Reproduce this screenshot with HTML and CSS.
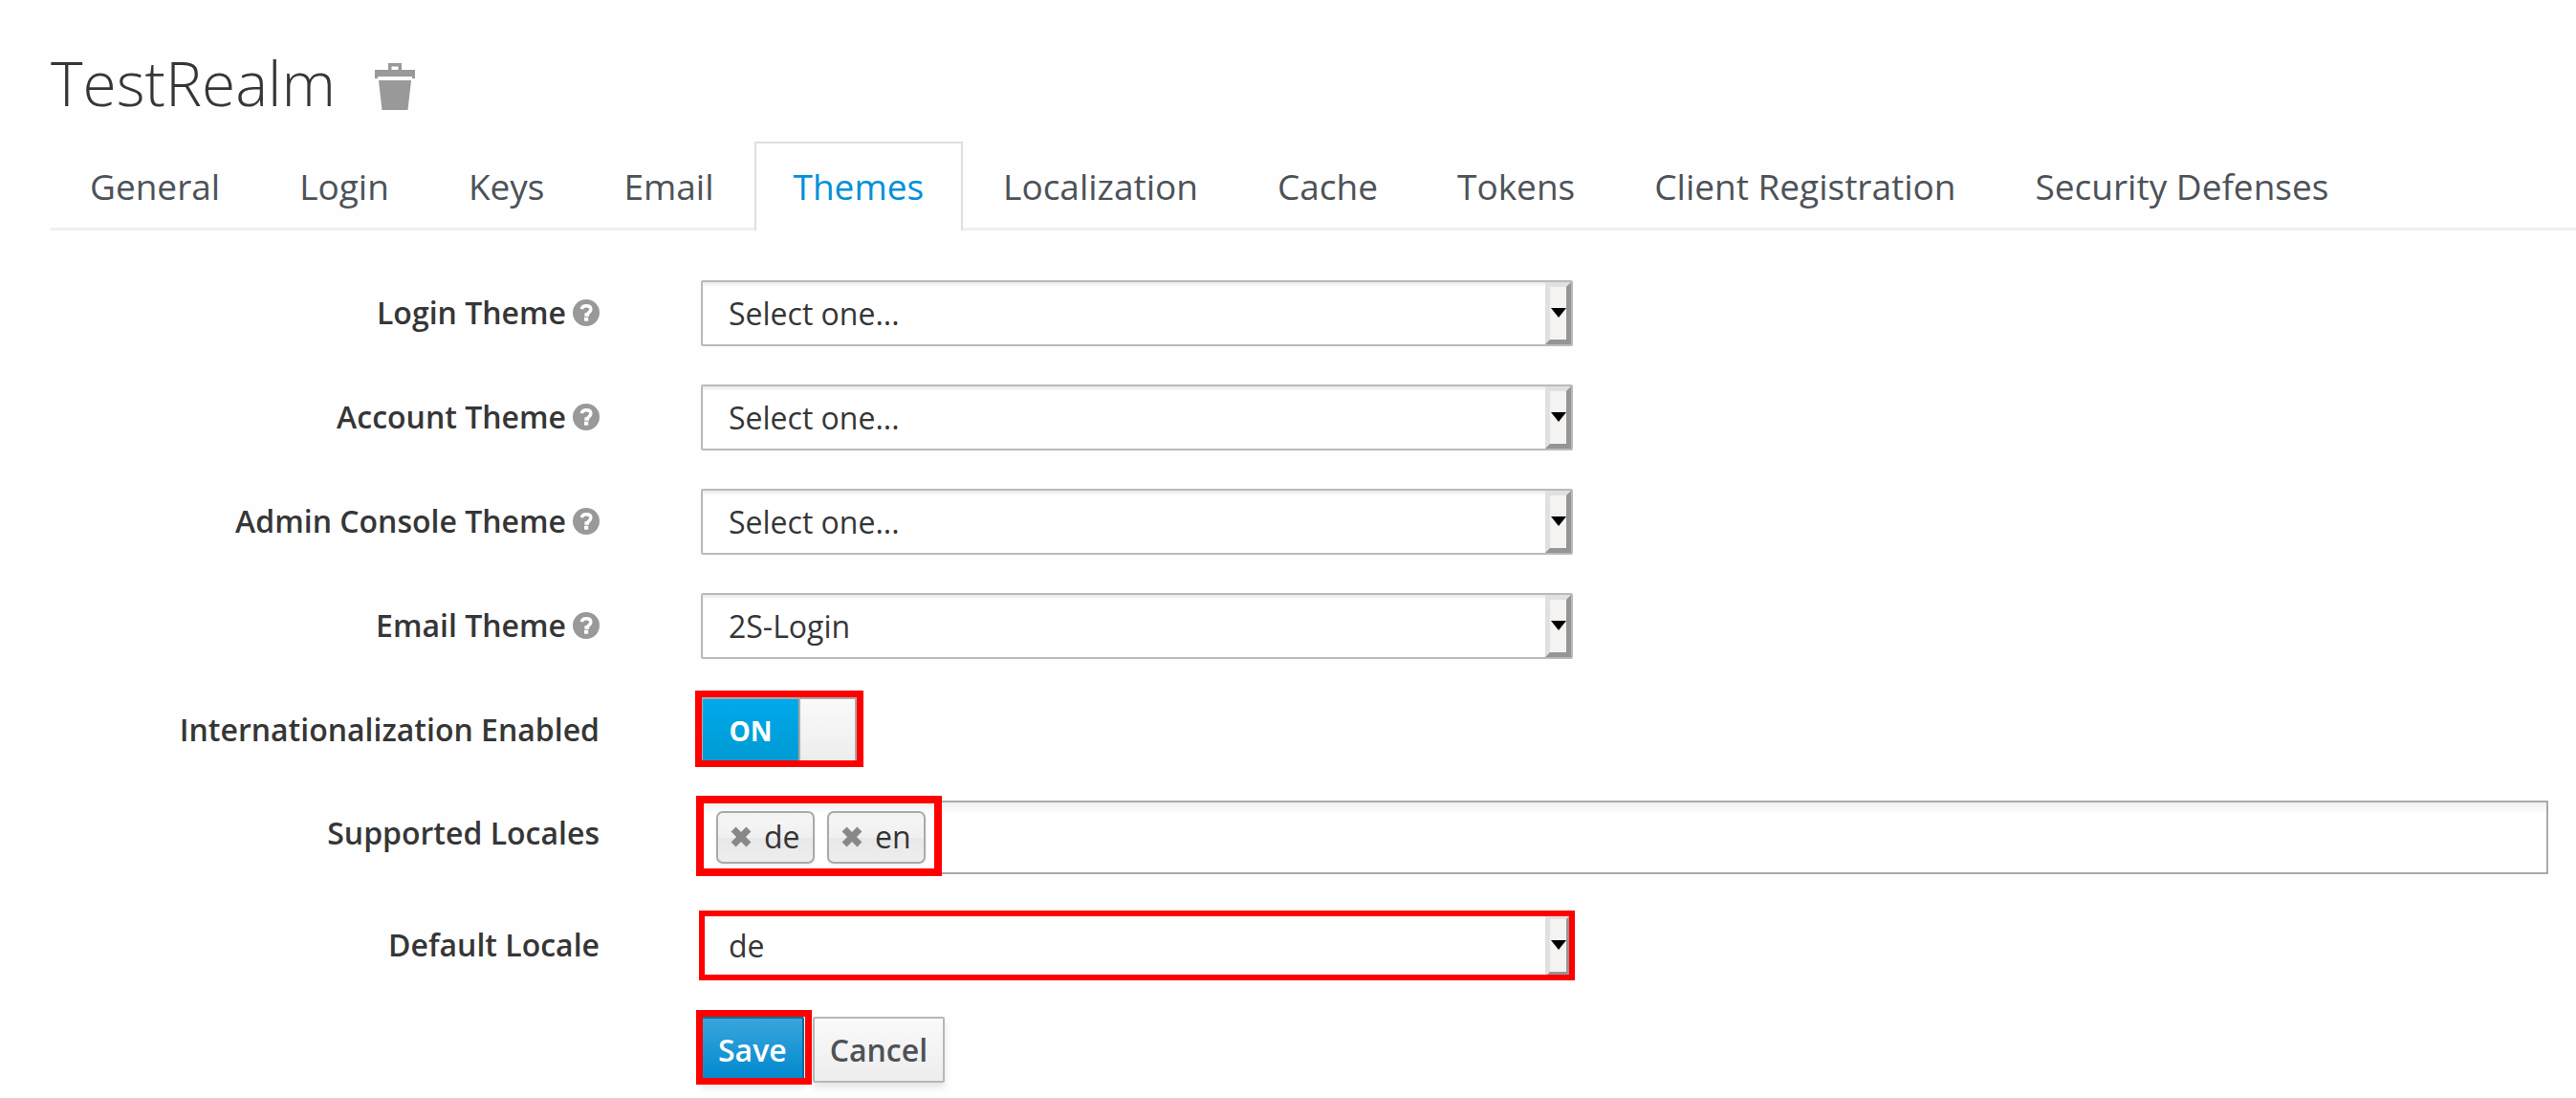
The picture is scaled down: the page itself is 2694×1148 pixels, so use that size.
FILE: index.html
```html
<!DOCTYPE html>
<html lang="en">
<head>
<meta charset="utf-8">
<title>TestRealm - Themes</title>
<link rel="stylesheet" href="styles.css">
</head>
<body>
<svg class="sprite" aria-hidden="true">
  <symbol id="help" viewBox="0 0 28 28">
    <circle cx="14" cy="14" r="14" fill="#999"/>
    <path d="M9.3 10.2C9.9 7.5 11.6 6.8 14 6.8c2.900 0 4.900 1.300 4.900 3.700 0 3-3.500 3.100-3.500 5.500h-3" fill="none" stroke="#fff" stroke-width="3.400"/>
    <rect x="12" y="18.700" width="4.200" height="4" fill="#fff"/>
  </symbol>
  <symbol id="cross" viewBox="0 0 20 20">
    <path d="M2.800 2.800l14.400 14.400M17.200 2.800L2.800 17.200" stroke="#888" stroke-width="6.400"/>
  </symbol>
</svg>
<main class="page">
  <header class="heading">
    <h1 class="title">TestRealm</h1>
    <button class="delete" type="button" aria-label="Delete realm">
      <svg class="trash" viewBox="0 0 42 49" aria-hidden="true"><path fill="#999" fill-rule="evenodd" d="M14 0h14v7h14v9h-3v-2H3v2H0V7h14zM17.500 3.500V7h7V3.500zM4 18h34l-3.500 31h-27z"/></svg>
    </button>
  </header>
  <nav class="tabs">
    <a class="tab" href="#general">General</a>
    <a class="tab" href="#login">Login</a>
    <a class="tab" href="#keys">Keys</a>
    <a class="tab" href="#email">Email</a>
    <a class="tab active" href="#themes" aria-current="page">Themes</a>
    <a class="tab" href="#localization">Localization</a>
    <a class="tab" href="#cache">Cache</a>
    <a class="tab" href="#tokens">Tokens</a>
    <a class="tab" href="#clients">Client Registration</a>
    <a class="tab" href="#security">Security Defenses</a>
  </nav>
  <form class="form">
    <div class="row">
      <label class="label" for="login-theme">Login Theme <svg class="help"><use href="#help"/></svg></label>
      <div class="picker"><select class="select" id="login-theme"><option>Select one...</option></select></div>
    </div>
    <div class="row">
      <label class="label" for="account-theme">Account Theme <svg class="help"><use href="#help"/></svg></label>
      <div class="picker"><select class="select" id="account-theme"><option>Select one...</option></select></div>
    </div>
    <div class="row">
      <label class="label" for="admin-theme">Admin Console Theme <svg class="help"><use href="#help"/></svg></label>
      <div class="picker"><select class="select" id="admin-theme"><option>Select one...</option></select></div>
    </div>
    <div class="row">
      <label class="label" for="email-theme">Email Theme <svg class="help"><use href="#help"/></svg></label>
      <div class="picker"><select class="select" id="email-theme"><option>2S-Login</option></select></div>
    </div>
    <div class="row">
      <label class="label" for="i18n">Internationalization Enabled</label>
      <div class="marked marked-switch">
        <div class="switch">
          <input class="switch-input" id="i18n" type="checkbox" checked>
          <span class="switch-on">ON</span>
          <span class="switch-knob"></span>
        </div>
      </div>
    </div>
    <div class="row">
      <label class="label" for="locales">Supported Locales</label>
      <div class="locales">
        <div class="marked marked-tags">
          <ul class="tags">
            <li class="tag"><button class="remove" type="button" aria-label="Remove de"><svg class="cross"><use href="#cross"/></svg></button>de</li>
            <li class="tag"><button class="remove" type="button" aria-label="Remove en"><svg class="cross"><use href="#cross"/></svg></button>en</li>
          </ul>
        </div>
        <input class="locale-input" id="locales" type="text">
      </div>
    </div>
    <div class="row">
      <label class="label" for="default-locale">Default Locale</label>
      <div class="marked marked-select">
        <div class="picker"><select class="select" id="default-locale"><option>de</option></select></div>
      </div>
    </div>
    <div class="row">
      <div class="actions">
        <div class="marked marked-save"><button class="button primary" type="submit">Save</button></div>
        <button class="button" type="button">Cancel</button>
      </div>
    </div>
  </form>
</main>
</body>
</html>
```
FILE: styles.css
```css
*, *::before, *::after { box-sizing: border-box; }

body {
  margin: 0;
  background: #fefefe;
  color: #363636;
  font: 32px/44px "Open Sans", "Noto Sans", sans-serif;
}

.sprite { position: absolute; width: 0; height: 0; }

.page { padding: 43px 0 0 53px; }

.heading { display: flex; align-items: center; gap: 41px; }
.title { margin: 0; font-size: 64px; line-height: 88px; font-weight: 300; }
.delete { padding: 6px 0 0; border: 0; background: none; }
.trash { display: block; width: 42px; height: 49px; }

.tabs {
  display: flex;
  gap: 1px;
  margin-top: 17px;
  border-bottom: 3px solid #efefef;
}
.tab {
  margin-bottom: -3px;
  padding: 22px 39px 23px;
  border: 2px solid transparent;
  border-bottom: 0;
  color: #4d5258;
  font-size: 37px;
  line-height: 46px;
  text-decoration: none;
  white-space: nowrap;
}
.tab.active {
  border-color: #dfdfdf;
  background: #fefefe;
  color: #0090d9;
}

.form {
  display: grid;
  gap: 40px;
  padding: 52px 29px 15px 0;
}
.row {
  display: grid;
  grid-template-columns: 574px minmax(0, 1fr);
  column-gap: 106px;
  align-items: start;
}
.label {
  display: flex;
  justify-content: flex-end;
  align-items: center;
  gap: 7px;
  height: 68px;
  font-weight: 600;
}
.help { width: 28px; height: 28px; }

.picker { position: relative; max-width: 912px; }
.select {
  appearance: none;
  display: block;
  width: 100%;
  height: 69px;
  padding: 0 27px;
  border: 2px solid #bababa;
  border-radius: 2px;
  background: #fff;
  box-shadow: inset 0 3px 3px rgba(3, 3, 3, 0.08);
  color: #363636;
  font: inherit;
}
/* Raised drop-down button at the right end of each select */
.picker::before {
  content: "";
  position: absolute;
  inset: 2px 2px 2px auto;
  width: 27px;
  border: 5px solid;
  border-color: #e0e0e0 #959595 #959595 #e0e0e0;
  background: #f4f3f2;
  pointer-events: none;
}
.picker::after {
  content: "";
  position: absolute;
  top: 29px;
  right: 7px;
  border: 8px solid transparent;
  border-top: 10px solid #000;
  border-bottom: 0;
  pointer-events: none;
}

/* Red frames laid over the settings to change */
.marked { position: relative; justify-self: start; }
.marked::after {
  content: "";
  position: absolute;
  z-index: 1;
  border: 7px solid #f00;
  pointer-events: none;
}
.marked-switch::after { inset: -7px -7px -5px -6px; }
.marked-tags::after { inset: -7px -17px -4px -7px; border-width: 8px; }
.marked-select { width: 100%; max-width: 912px; }
.marked-select::after { inset: -2px; border-width: 6px; }
.marked-save::after { inset: -7px -8px -2px -5px; }

.switch {
  position: relative;
  display: flex;
  width: 163px;
  height: 68px;
  border: 2px solid #aaa;
}
.switch-input {
  position: absolute;
  inset: 0;
  width: 100%;
  height: 100%;
  margin: 0;
  opacity: 0;
}
.switch-on {
  flex: 1;
  background: linear-gradient(#00a9ec, #009bd3);
  color: #fff;
  font-size: 28px;
  font-weight: 700;
  line-height: 66px;
  text-align: center;
}
.switch-knob {
  width: 59px;
  border-left: 2px solid #aaa;
  background: linear-gradient(#fafafa, #ededed);
}

.locales {
  display: flex;
  height: 77px;
  border: 2px solid #aaa;
  background: linear-gradient(#eee, #fff 12px);
}
.tags {
  display: flex;
  gap: 13px;
  margin: 0;
  padding: 9px 0 9px 14px;
  list-style: none;
}
.tag {
  display: flex;
  align-items: center;
  width: 103px;
  height: 55px;
  padding: 0 0 1px 13px;
  border: 2px solid #aaa;
  border-radius: 7px;
  background: linear-gradient(#f4f4f4 20%, #f0f0f0 50%, #e8e8e8 52%, #eee);
  box-shadow: 0 1px 3px rgba(0, 0, 0, 0.1);
  color: #333;
}
.remove { margin-right: 13px; padding: 0; border: 0; background: none; }
.cross { display: block; width: 22px; height: 22px; }
.locale-input {
  flex: 1;
  min-width: 0;
  padding: 0 24px;
  border: 0;
  background: none;
  font: inherit;
}

.actions { grid-column: 2; display: flex; gap: 9px; }
.button {
  display: block;
  height: 69px;
  padding: 0 16px;
  border: 2px solid #b7b7b7;
  border-radius: 2px;
  background: linear-gradient(#fafafa, #ededed);
  box-shadow: 0 5px 7px rgba(3, 3, 3, 0.1);
  color: #4d5258;
  font: inherit;
  font-weight: 600;
}
.primary {
  border-color: #006e9c;
  background: linear-gradient(#39a5dc, #0088ce);
  color: #fff;
}
```
